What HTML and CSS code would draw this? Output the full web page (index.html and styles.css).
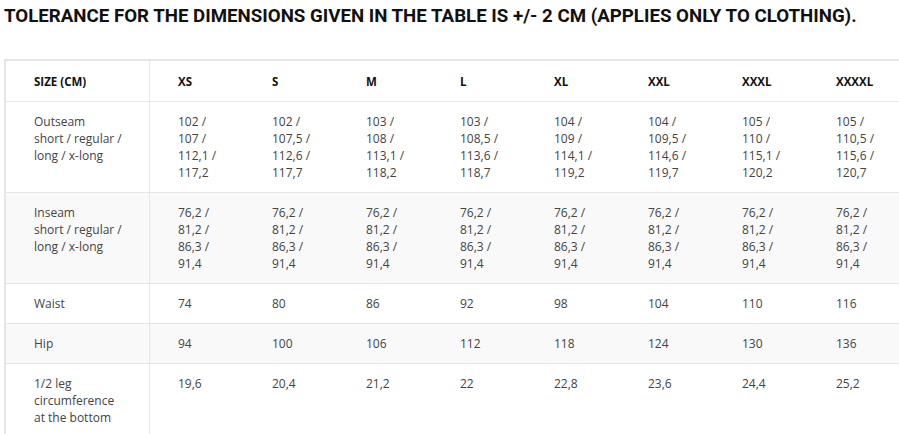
FILE: index.html
```html
<!DOCTYPE html>
<html>
<head>
<meta charset="utf-8">
<link rel="stylesheet" href="styles.css">
</head>
<body>
<h2 class="title">TOLERANCE FOR THE DIMENSIONS GIVEN IN THE TABLE IS +/- 2 CM (APPLIES ONLY TO CLOTHING).</h2>
<div class="wrap">
<table class="sizes">
<colgroup>
<col class="c0"><col class="cn"><col class="cn"><col class="cn"><col class="cn"><col class="cn"><col class="cn"><col class="cn"><col class="clast">
</colgroup>
<thead>
<tr><th>SIZE (CM)</th><th>XS</th><th>S</th><th>M</th><th>L</th><th>XL</th><th>XXL</th><th>XXXL</th><th>XXXXL</th></tr>
</thead>
<tbody>
<tr>
<td>Outseam<br>short / regular /<br>long / x-long</td>
<td>102 /<br>107 /<br>112,1 /<br>117,2</td>
<td>102 /<br>107,5 /<br>112,6 /<br>117,7</td>
<td>103 /<br>108 /<br>113,1 /<br>118,2</td>
<td>103 /<br>108,5 /<br>113,6 /<br>118,7</td>
<td>104 /<br>109 /<br>114,1 /<br>119,2</td>
<td>104 /<br>109,5 /<br>114,6 /<br>119,7</td>
<td>105 /<br>110 /<br>115,1 /<br>120,2</td>
<td>105 /<br>110,5 /<br>115,6 /<br>120,7</td>
</tr>
<tr class="alt">
<td>Inseam<br>short / regular /<br>long / x-long</td>
<td>76,2 /<br>81,2 /<br>86,3 /<br>91,4</td>
<td>76,2 /<br>81,2 /<br>86,3 /<br>91,4</td>
<td>76,2 /<br>81,2 /<br>86,3 /<br>91,4</td>
<td>76,2 /<br>81,2 /<br>86,3 /<br>91,4</td>
<td>76,2 /<br>81,2 /<br>86,3 /<br>91,4</td>
<td>76,2 /<br>81,2 /<br>86,3 /<br>91,4</td>
<td>76,2 /<br>81,2 /<br>86,3 /<br>91,4</td>
<td>76,2 /<br>81,2 /<br>86,3 /<br>91,4</td>
</tr>
<tr>
<td>Waist</td><td>74</td><td>80</td><td>86</td><td>92</td><td>98</td><td>104</td><td>110</td><td>116</td>
</tr>
<tr class="alt">
<td>Hip</td><td>94</td><td>100</td><td>106</td><td>112</td><td>118</td><td>124</td><td>130</td><td>136</td>
</tr>
<tr>
<td>1/2 leg<br>circumference<br>at the bottom</td><td>19,6</td><td>20,4</td><td>21,2</td><td>22</td><td>22,8</td><td>23,6</td><td>24,4</td><td>25,2</td>
</tr>
</tbody>
</table>
</div>
</body>
</html>
```
FILE: styles.css
```css
html, body {
  margin: 0;
  padding: 0;
  background: #fff;
}
body {
  font-family: "Open Sans", "Liberation Sans", sans-serif;
  overflow: hidden;
}
.title {
  margin: 0;
  padding: 5px 0 0 4px;
  font-family: Roboto, "Liberation Sans", sans-serif;
  font-weight: 700;
  font-size: 18.7px;
  line-height: 22px;
  color: #111;
  white-space: nowrap;
}
.wrap {
  margin-top: 32px;
  padding-left: 4px;
}
.sizes {
  border-collapse: separate;
  border-spacing: 0;
  table-layout: fixed;
  width: 895px;
  border-top: 2px solid #e6e6e6;
  border-left: 2px solid #e6e6e6;
  font-size: 12px;
  line-height: 17px;
  color: #444;
}
.c0 { width: 144px; }
.cn { width: 94px; }
.clast { width: 93px; }
.sizes th,
.sizes td {
  text-align: left;
  vertical-align: top;
  padding: 11px 0 11px 28px;
  border-bottom: 1px solid #e6e6e6;
}
.sizes th:first-child,
.sizes td:first-child {
  border-right: 1px solid #e6e6e6;
}
.sizes th {
  font-weight: 700;
  font-size: 11.5px;
  color: #111;
  padding-top: 12px;
  padding-bottom: 11px;
}
.sizes tr.alt td {
  background: #f9f9f9;
}
```
